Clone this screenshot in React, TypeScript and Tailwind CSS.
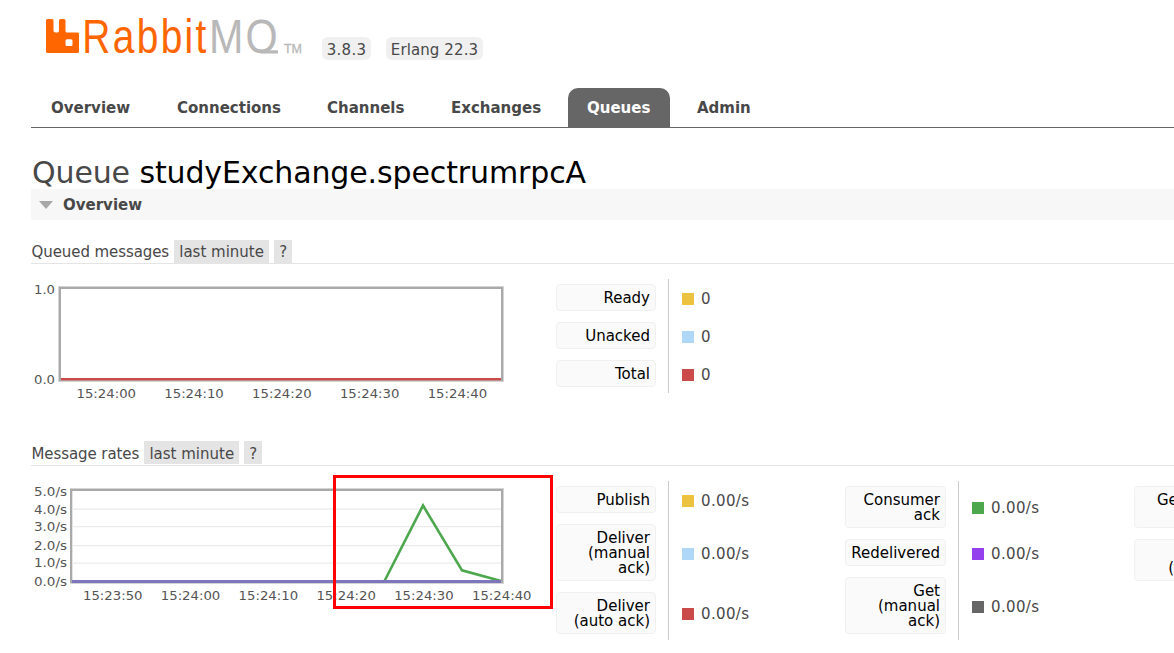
import React from "react";

type Metric = { lines: string[]; color: string; value: string };

const YELLOW = "bg-[#edc240]";
const BLUE = "bg-[#afd8f8]";
const RED = "bg-[#cb4b4b]";
const GREEN = "bg-[#4da74d]";
const PURPLE = "bg-[#9440ed]";
const GRAY = "bg-[#666666]";

const queued: Metric[] = [
  { lines: ["Ready"], color: YELLOW, value: "0" },
  { lines: ["Unacked"], color: BLUE, value: "0" },
  { lines: ["Total"], color: RED, value: "0" },
];

const rates: Metric[][] = [
  [
    { lines: ["Publish"], color: YELLOW, value: "0.00/s" },
    { lines: ["Deliver", "(manual", "ack)"], color: BLUE, value: "0.00/s" },
    { lines: ["Deliver", "(auto ack)"], color: RED, value: "0.00/s" },
  ],
  [
    { lines: ["Consumer", "ack"], color: GREEN, value: "0.00/s" },
    { lines: ["Redelivered"], color: PURPLE, value: "0.00/s" },
    { lines: ["Get", "(manual", "ack)"], color: GRAY, value: "0.00/s" },
  ],
  [
    { lines: ["Get (auto", "ack)"], color: YELLOW, value: "0.00/s" },
    { lines: ["Get", "(empty)"], color: BLUE, value: "0.00/s" },
  ],
];

const tabs = [
  { name: "Overview", cls: "w-[118px]" },
  { name: "Connections", cls: "w-[142px]" },
  { name: "Channels", cls: "w-[116px]" },
  { name: "Exchanges", cls: "w-[128px]" },
  { name: "Queues", cls: "w-[102px]", active: true },
  { name: "Admin", cls: "w-[91px]" },
];

function Logo() {
  return (
    <svg className="block" width="260" height="48" viewBox="44 12 260 48">
      <clipPath id="baseline">
        <rect x="200" y="12" width="90" height="41.5" />
      </clipPath>
      <path
        fill="#ff6600"
        fillRule="evenodd"
        d="M47.5 19H52Q53.5 19 53.5 20.5V30.5Q53.5 32.5 55.500 32.500H57.500Q59 32.500 59 30.500V20.500Q59 19 60.500 19H64Q65.500 19 65.500 20.500V31Q65.500 32.500 67 32.500H77.500Q79 32.500 79 34V51.500Q79 53 77.500 53H47.500Q46 53 46 51.500V20.500Q46 19 47.500 19ZM67 39.300Q65.500 39.300 65.500 40.800V44.500Q65.500 46 67 46H71Q72.500 46 72.500 44.500V40.800Q72.500 39.300 71 39.300Z"
      />
      <text transform="translate(82.300 53) scale(0.81 1)" fontFamily="'Liberation Sans', sans-serif" fontSize="48" letterSpacing="2.900" fill="#ff6600">
        Rabbit
      </text>
      <g clipPath="url(#baseline)">
        <text transform="translate(209 53) scale(0.860 1)" fontFamily="'Liberation Sans', sans-serif" fontSize="48" letterSpacing="2.500" fill="#b8b8b8">
          MQ
        </text>
      </g>
      <rect x="264" y="50.300" width="14" height="3.200" fill="#b8b8b8" />
      <text x="284" y="53" fontFamily="'Liberation Sans', sans-serif" fontSize="12.500" fill="#b8b8b8" stroke="#b8b8b8" strokeWidth="0.300" textLength="18" lengthAdjust="spacingAndGlyphs">
        TM
      </text>
    </svg>
  );
}

function Tick({ x, y, w, children }: { x: number; y: number; w: number; children: string }) {
  return (
    <text x={x} y={y} textLength={w} lengthAdjust="spacingAndGlyphs" fontSize="13" fill="#545454">
      {children}
    </text>
  );
}

function QueuedChart() {
  const times = ["15:24:00", "15:24:10", "15:24:20", "15:24:30", "15:24:40"];
  return (
    <svg className="block shrink-0" width="525" height="130" viewBox="31 279 525 130">
      <rect x="58" y="286" width="446" height="96" fill="#d4d4d4" />
      <rect x="59" y="287" width="444" height="94" fill="#a9a9a9" />
      <rect x="61" y="289" width="440" height="90" fill="#fff" />
      <rect x="61" y="380" width="440" height="1" fill="#bf8f8f" />
      <rect x="61" y="378" width="440" height="2" fill="#cb4b4b" />
      <Tick x={34} y={294} w={21}>1.0</Tick>
      <Tick x={34} y={384} w={21}>0.0</Tick>
      {times.map((t, i) => (
        <Tick key={t} x={76.5 + i * 87.8} y={398} w={59.5}>{t}</Tick>
      ))}
    </svg>
  );
}

function RatesChart() {
  const times = ["15:23:50", "15:24:00", "15:24:10", "15:24:20", "15:24:30", "15:24:40"];
  const levels = [
    { label: "5.0/s", y: 496 },
    { label: "4.0/s", y: 514 },
    { label: "3.0/s", y: 531 },
    { label: "2.0/s", y: 550 },
    { label: "1.0/s", y: 567 },
    { label: "0.0/s", y: 586 },
  ];
  return (
    <svg className="block shrink-0" width="525" height="130" viewBox="31 481 525 130">
      <rect x="70" y="488" width="434" height="96" fill="#d4d4d4" />
      <rect x="70" y="489" width="433" height="94" fill="#a9a9a9" />
      <rect x="72" y="491" width="429" height="90" fill="#fff" />
      <rect x="72" y="491" width="1" height="90" fill="#e4e4e4" />
      {[508.5, 526, 545, 562.5].map((y) => (
        <rect key={y} x="72" y={y} width="429" height="1.2" fill="#eaeaea" />
      ))}
      <polyline points="384.500,581 423,505.500 462,570.300 501,581" fill="none" stroke="#4da74d" strokeWidth="2.600" />
      <rect x="72" y="580" width="429" height="3" fill="#7d76bd" />
      {levels.map((l) => (
        <Tick key={l.label} x={34} y={l.y} w={33}>{l.label}</Tick>
      ))}
      {times.map((t, i) => (
        <Tick key={t} x={83 + i * 77.8} y={600} w={59.5}>{t}</Tick>
      ))}
    </svg>
  );
}

function MetricTable({ rows, label }: { rows: Metric[]; label: string }) {
  return (
    <div className="flex w-[289px] shrink-0 flex-col">
      {rows.map((m, i) => (
        <div key={i} className="flex">
          <div className={`shrink-0 border-r border-[#cccccc] pt-[5px] pr-[12px] pb-[6px] ${label}`}>
            <div className="rounded-[4px] border border-[#f0f0f0] bg-[#fafafa] px-[5px] pt-[6px] pb-[4px] text-right text-[15px] leading-[15px] text-black">
              {m.lines.map((l) => (
                <div key={l} className="whitespace-nowrap">{l}</div>
              ))}
            </div>
          </div>
          <div className="flex items-center gap-[7px] pt-px pl-[13px] text-[15px] leading-[18px] tracking-[0.35px] text-[#484848]">
            <span className={`h-[12px] w-[12px] ${m.color}`} />
            <span>{m.value}</span>
          </div>
        </div>
      ))}
    </div>
  );
}

function SectionTitle({ title, cls }: { title: string; cls: string }) {
  return (
    <div className={`flex border-b border-[#e4e4e4] text-[15px] whitespace-nowrap text-[#484848] ${cls}`}>
      <span className="h-[23px] pl-[0.5px] tracking-[-0.08px]">{title}</span>
      <span className="ml-[4.5px] h-[23px] w-[95px] bg-[#e4e4e4] pl-px text-center">last minute</span>
      <span className="ml-[5px] h-[23px] w-[18px] bg-[#e4e4e4] pl-px text-center">?</span>
    </div>
  );
}

export default function App() {
  return (
    <div className="h-[653px] w-[1174px] overflow-hidden bg-white font-['DejaVu_Sans',sans-serif] text-[#484848]">
      <header className="flex h-[88px] items-start pt-[12px] pl-[44px] text-[15px]">
        <Logo />
        <span className="mt-[25px] ml-[18px] h-[23px] w-[49px] rounded-[6px] bg-[#f0f0f0] text-center leading-[26px] tracking-[0.3px]">3.8.3</span>
        <span className="mt-[25px] ml-[15px] h-[23px] w-[97px] rounded-[6px] bg-[#f0f0f0] text-center leading-[26px] tracking-[0.1px] whitespace-nowrap">Erlang 22.3</span>
      </header>

      <div className="pl-[31px]">
        <nav className="flex h-[40px] gap-[8px] border-b border-[#666666] pl-px">
          {tabs.map((t) => (
            <a
              key={t.name}
              className={`h-[39px] rounded-t-[10px] pl-[19px] text-[15px] leading-[41px] font-bold whitespace-nowrap ${t.cls} ${t.active ? "bg-[#666666] text-white" : ""}`}
            >
              {t.name}
            </a>
          ))}
        </nav>

        <h1 className="h-[61px] pt-[27px] pl-px text-[30px] leading-[36px] tracking-[-0.12px] whitespace-nowrap">
          Queue <b className="font-normal text-black">studyExchange.spectrumrpcA</b>
        </h1>

        <h2 className="flex h-[31px] items-center bg-[#f7f7f7] pl-[8px] text-[15px] font-bold">
          <svg width="14" height="8" viewBox="0 0 14 8">
            <path d="M0 0H14L7 8Z" fill="#a8a8a8" />
          </svg>
          <span className="ml-[10px] pt-[2px]">Overview</span>
        </h2>

        <SectionTitle title="Queued messages" cls="mt-[20px] h-[24px] leading-[25px]" />
        <div className="mt-[15px] flex h-[162px]">
          <QueuedChart />
          <MetricTable rows={queued} label="w-[113px]" />
        </div>

        <SectionTitle title="Message rates" cls="h-[25px] leading-[27px]" />
        <div className="relative mt-[15px] flex items-start">
          <RatesChart />
          {rates.map((rows, i) => (
            <MetricTable key={i} rows={rows} label={i === 1 ? "w-[114px]" : "w-[113px]"} />
          ))}
          <div className="absolute top-[-6px] left-[302px] h-[134px] w-[220px] border-[3px] border-[#ff0000]" />
        </div>
      </div>
    </div>
  );
}
